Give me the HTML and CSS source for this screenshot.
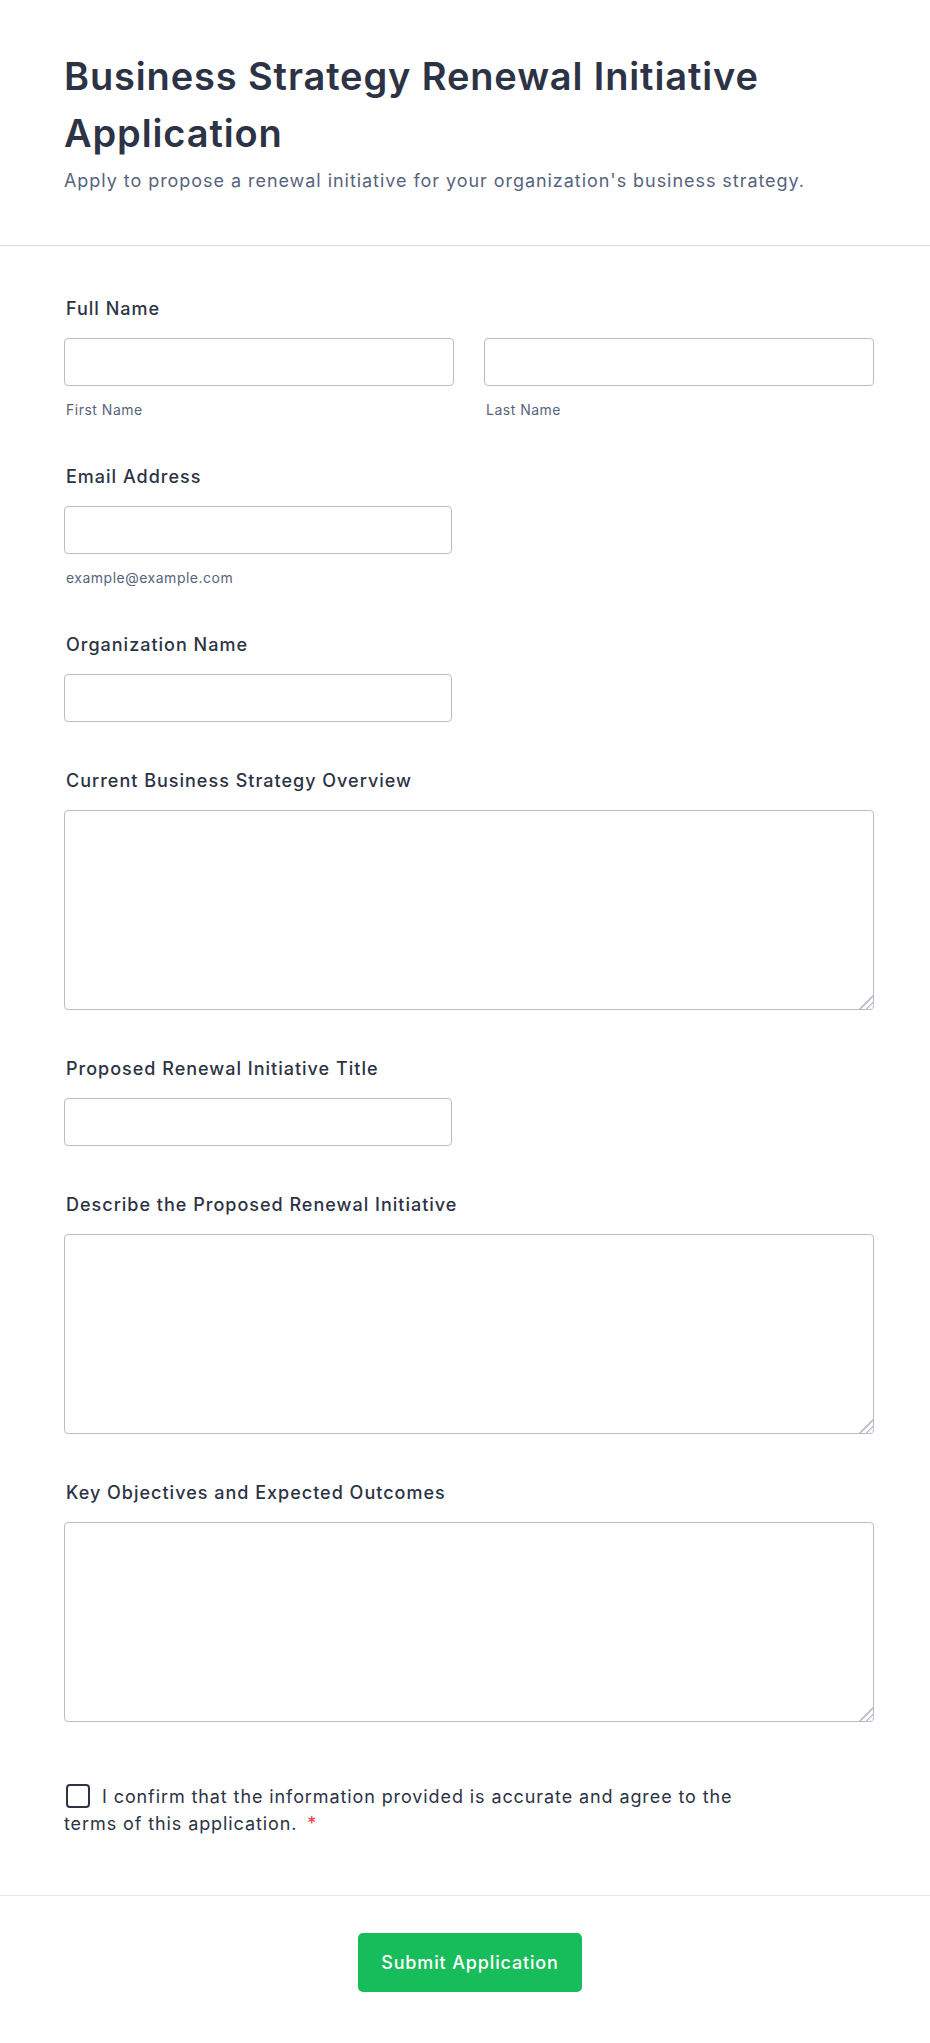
FILE: index.html
```html
<!DOCTYPE html>
<html lang="en">
<head>
<meta charset="utf-8">
<title>Business Strategy Renewal Initiative Application</title>
<link rel="stylesheet" href="styles.css">
</head>
<body>
<div class="page">
  <header class="form-header">
    <h1 class="title">Business Strategy Renewal Initiative Application</h1>
    <p class="subtitle">Apply to propose a renewal initiative for your organization's business strategy.</p>
  </header>

  <main class="form-body">
    <div class="field field-sub">
      <label class="label">Full Name</label>
      <div class="name-row">
        <div class="name-col">
          <input class="input" type="text">
          <span class="sublabel">First Name</span>
        </div>
        <div class="name-col">
          <input class="input" type="text">
          <span class="sublabel">Last Name</span>
        </div>
      </div>
    </div>

    <div class="field field-sub">
      <label class="label">Email Address</label>
      <input class="input input-short" type="email">
      <span class="sublabel">example@example.com</span>
    </div>

    <div class="field">
      <label class="label">Organization Name</label>
      <input class="input input-short" type="text">
    </div>

    <div class="field">
      <label class="label">Current Business Strategy Overview</label>
      <textarea class="textarea"></textarea>
    </div>

    <div class="field">
      <label class="label">Proposed Renewal Initiative Title</label>
      <input class="input input-short" type="text">
    </div>

    <div class="field">
      <label class="label">Describe the Proposed Renewal Initiative</label>
      <textarea class="textarea"></textarea>
    </div>

    <div class="field">
      <label class="label">Key Objectives and Expected Outcomes</label>
      <textarea class="textarea"></textarea>
    </div>

    <div class="field field-consent">
      <p class="consent"><span class="checkbox"></span>I confirm that the information provided is accurate and agree to the terms of this application.<span class="required">*</span></p>
    </div>
  </main>

  <footer class="form-footer">
    <button class="submit" type="button">Submit Application</button>
  </footer>
</div>
</body>
</html>
```

FILE: styles.css
```css
* {
  box-sizing: border-box;
}

html, body {
  margin: 0;
  padding: 0;
  background: #ffffff;
}

body {
  font-family: "Inter", "Noto Sans", sans-serif;
  color: #2c3345;
}

.page {
  width: 930px;
  min-height: 2043px;
  background: #ffffff;
}

.form-header {
  padding: 48px 64px 51px 64px;
  border-bottom: 1px solid #d8dae1;
}

.title {
  margin: 0;
  font-size: 38px;
  line-height: 57px;
  font-weight: 600;
  letter-spacing: 0.87px;
  color: #2c3345;
}

.subtitle {
  margin: 5px 0 0 0;
  font-size: 18px;
  line-height: 27px;
  letter-spacing: 0.95px;
  color: #57647e;
}

.form-body {
  padding: 49px 56px 0 64px;
}

.field {
  margin-bottom: 45px;
}

.field-sub {
  margin-bottom: 43px;
}

.label {
  display: block;
  padding-left: 2px;
  font-size: 18px;
  line-height: 27px;
  font-weight: 500;
  letter-spacing: 1px;
  color: #2c3345;
  margin-bottom: 16px;
}

.name-row {
  display: grid;
  grid-template-columns: 390px 390px;
  column-gap: 30px;
}

.name-col {
  display: flex;
  flex-direction: column;
}

.input {
  display: block;
  width: 100%;
  height: 48px;
  border: 1px solid #b8bdc9;
  border-radius: 4px;
  background: #ffffff;
  font-family: inherit;
  font-size: 16px;
  padding: 0 12px;
  margin: 0;
}

.input-short {
  width: 388px;
}

.sublabel {
  display: block;
  margin-top: 13px;
  padding-left: 2px;
  font-size: 14px;
  line-height: 21px;
  letter-spacing: 0.5px;
  color: #57647e;
}

.textarea {
  display: block;
  width: 810px;
  height: 200px;
  border: 1px solid #b8bdc9;
  border-radius: 4px;
  background: #ffffff;
  font-family: inherit;
  font-size: 16px;
  padding: 10px 12px;
  margin: 0;
  resize: vertical;
}

.textarea::-webkit-resizer {
  background:
    linear-gradient(135deg, transparent 0 52%, #c3c7d1 52% 60%, transparent 60% 74%, #c3c7d1 74% 82%, transparent 82%);
}

.field-consent {
  margin-top: 61px;
  margin-bottom: 58px;
}

.consent {
  margin: 0;
  max-width: 690px;
  font-size: 18px;
  line-height: 27px;
  letter-spacing: 0.9px;
  color: #2c3345;
}

.checkbox {
  display: inline-block;
  width: 24px;
  height: 24px;
  margin: 0 12px 0 2px;
  border: 2px solid #2c3345;
  border-radius: 4px;
  vertical-align: -5px;
  background: #ffffff;
}

.required {
  color: #f23a3c;
  margin-left: 10px;
}

.form-footer {
  border-top: 1px solid #e6e9f0;
  padding: 37px 60px 50px 64px;
  display: flex;
  justify-content: center;
}

.submit {
  font-family: inherit;
  font-size: 18px;
  line-height: 27px;
  font-weight: 500;
  letter-spacing: 0.85px;
  color: #ffffff;
  background: #18bd5b;
  border: none;
  border-radius: 5px;
  padding: 16px 23px;
  margin-left: 6px;
  cursor: pointer;
}
```
